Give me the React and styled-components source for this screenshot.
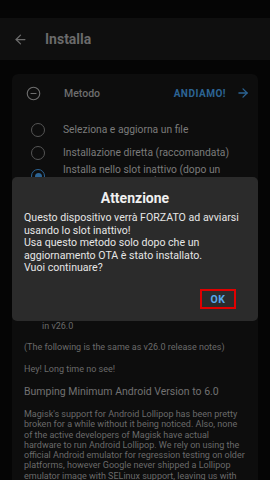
import React from 'react';
import styled, { createGlobalStyle } from 'styled-components';
import { ArrowLeft, ArrowRight, CircleMinus } from 'lucide-react';

const GlobalStyle = createGlobalStyle`
  html, body {
    margin: 0;
    padding: 0;
    background: #050505;
  }
  body {
    font-family: Roboto, "Liberation Sans", sans-serif;
  }
`;

// whole phone screen, the dialog sits on top of it
const Screen = styled.div`
  position: relative;
  width: 270px;
  height: 480px;
  overflow: hidden;
  background: #050505;
`;

const StatusBar = styled.div`
  height: 18px;
  background: #050505;
`;

const AppBar = styled.div`
  height: 42px;
  background: #0f0f0f;
  display: flex;
  align-items: center;
  padding-left: 13px;
  gap: 17px;
  color: #6c6c6c;
`;

const AppTitle = styled.div`
  font-size: 14px;
  font-weight: 700;
  color: #6a6a6a;
`;

const Content = styled.div`
  padding: 14px 12px 0;
  display: flex;
  flex-direction: column;
  gap: 10px;
`;

const Card = styled.div`
  background: #0d0d0d;
  border-radius: 6px;
  padding-bottom: ${p => p.$pb || 0}px;
`;

const CardHeader = styled.div`
  height: 38px;
  display: flex;
  align-items: center;
  padding: 0 8px 0 14px;
  color: #6e6e6e;
`;

const HeaderLabel = styled.div`
  margin-left: ${p => (p.$flush ? 0 : 23)}px;
  flex: 1;
  font-size: 10.5px;
  font-weight: 500;
  color: #6e6e6e;
`;

const GoButton = styled.div`
  display: flex;
  align-items: center;
  gap: 10px;
  font-size: 10px;
  font-weight: 700;
  letter-spacing: 0.5px;
  color: #2c6494;
`;

const RadioList = styled.div`
  padding-top: 6px;
`;

const RadioRow = styled.div`
  min-height: 23px;
  display: flex;
  align-items: center;
  padding-left: 19px;
`;

const RadioDot = styled.span`
  width: 14px;
  height: 14px;
  box-sizing: border-box;
  border-radius: 50%;
  border: 1.5px solid ${p => (p.$checked ? '#2c6494' : '#555')};
  display: flex;
  align-items: center;
  justify-content: center;
  flex-shrink: 0;
  &::after {
    content: '';
    display: ${p => (p.$checked ? 'block' : 'none')};
    width: 7px;
    height: 7px;
    border-radius: 50%;
    background: #2c6494;
  }
`;

const RadioText = styled.span`
  margin-left: 18px;
  font-size: 10.3px;
  line-height: 12px;
  color: #7b7b7b;
`;

const Notes = styled.div`
  padding: ${p => p.$top}px 12px 0;
  color: #6a6a6a;
  font-size: 9px;
`;

const NoteLine = styled.p`
  margin: 0 0 ${p => p.$gap ?? 11}px;
  padding-left: ${p => p.$indent || 0}px;
  line-height: 10.5px;
`;

const NoteHeading = styled.h3`
  margin: 0 0 11px;
  font-size: 10.5px;
  font-weight: 400;
  line-height: 13px;
  color: #717171;
`;

const Paragraph = styled.p`
  margin: 0;
  font-size: 9px;
  line-height: 10.3px;
  color: #6a6a6a;
`;

const Dialog = styled.div`
  position: absolute;
  left: 12px;
  top: 177px;
  width: 246px;
  height: 144px;
  box-sizing: border-box;
  background: #2b2b2b;
  border-radius: 5px;
  padding: 13px 12px 0;
  display: flex;
  flex-direction: column;
`;

const DialogTitle = styled.div`
  text-align: center;
  font-size: 14px;
  font-weight: 700;
  line-height: 16px;
  color: #f0f0f0;
`;

const DialogBody = styled.div`
  margin-top: 6px;
  font-size: 10.6px;
  line-height: 12.5px;
  color: #e6e6e6;
`;

const DialogActions = styled.div`
  margin-top: auto;
  margin-bottom: 12px;
  display: flex;
  justify-content: flex-end;
  padding-right: 10px;
`;

const OkButton = styled.div`
  width: 36px;
  height: 20px;
  box-sizing: border-box;
  border: 2px solid #e00000;
  display: flex;
  align-items: center;
  justify-content: center;
  font-size: 10.5px;
  font-weight: 700;
  letter-spacing: 0.6px;
  color: #57a8ec;
`;

const options = [
  { label: 'Seleziona e aggiorna un file' },
  { label: 'Installazione diretta (raccomandata)' },
  { label: 'Installa nello slot inattivo (dopo un aggiornamento OTA)', checked: true },
];

export default function App() {
  return (
    <>
      <GlobalStyle />
      <Screen>
        <StatusBar />
        <AppBar>
          <ArrowLeft size={15} strokeWidth={2} />
          <AppTitle>Installa</AppTitle>
        </AppBar>
        <Content>
          <Card $pb={8}>
            <CardHeader>
              <CircleMinus size={15} strokeWidth={1.8} />
              <HeaderLabel>Metodo</HeaderLabel>
              <GoButton>
                ANDIAMO!
                <ArrowRight size={14} strokeWidth={2.2} />
              </GoButton>
            </CardHeader>
            <RadioList>
              {options.map(o => (
                <RadioRow key={o.label}>
                  <RadioDot $checked={o.checked} />
                  <RadioText>{o.label}</RadioText>
                </RadioRow>
              ))}
            </RadioList>
          </Card>
          <Card>
            <CardHeader>
              <HeaderLabel $flush>Magisk 26.1</HeaderLabel>
            </CardHeader>
            <Notes $top={37}>
              <NoteLine $gap={4}>- [App] Fix crashing when revoking root permissions</NoteLine>
              <NoteLine $gap={4}>- [MagiskInit] Always prefer ext4 partitions over f2fs</NoteLine>
              <NoteLine $gap={0}>- [MagiskInit] Fix a bug that causes sepolicy patches</NoteLine>
              <NoteLine $indent={18}>in v26.0</NoteLine>
              <NoteLine>(The following is the same as v26.0 release notes)</NoteLine>
              <NoteLine>Hey! Long time no see!</NoteLine>
              <NoteHeading>Bumping Minimum Android Version to 6.0</NoteHeading>
              <Paragraph>
                Magisk's support for Android Lollipop has been pretty broken for a while without it
                being noticed. Also, none of the active developers of Magisk have actual hardware to
                run Android Lollipop. We rely on using the official Android emulator for regression
                testing on older platforms, however Google never shipped a Lollipop emulator image
                with SELinux support, leaving us with no way to test.
              </Paragraph>
            </Notes>
          </Card>
        </Content>
        <Dialog>
          <DialogTitle>Attenzione</DialogTitle>
          <DialogBody>
            Questo dispositivo verrà FORZATO ad avviarsi usando lo slot inattivo!
            <br />
            Usa questo metodo solo dopo che un aggiornamento OTA è stato installato.
            <br />
            Vuoi continuare?
          </DialogBody>
          <DialogActions>
            <OkButton>OK</OkButton>
          </DialogActions>
        </Dialog>
      </Screen>
    </>
  );
}
